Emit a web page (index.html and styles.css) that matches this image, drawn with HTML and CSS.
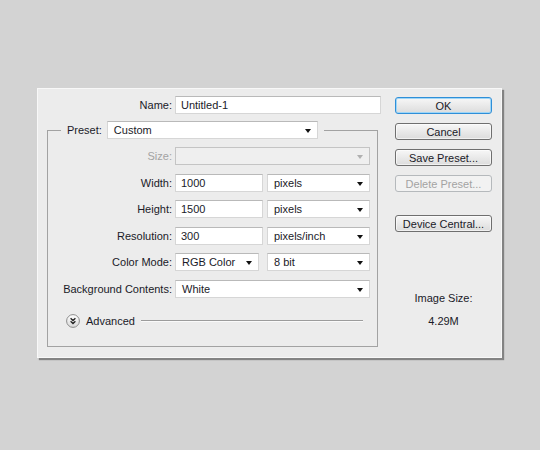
FILE: index.html
```html
<html>
	<head>
		<meta name="viewport" content="width=device-width, initial-scale=1">
		<link rel="stylesheet" href="styles.css">
	</head>
	<body>
		<form class="dialog">
			<div class="main">
				<div class="row name-row">
					<label class="lbl" for="docName">Name:</label>
					<input class="field w-name" id="docName" value="Untitled-1" />
				</div>

				<fieldset class="group">
					<legend class="preset">
						<span class="preset-lbl">Preset:</span>
						<div class="select w-preset">Custom</div>
					</legend>

					<div class="rows">
						<div class="row">
							<span class="lbl off">Size:</span>
							<div class="select off w-full"></div>
						</div>
						<div class="row">
							<label class="lbl" for="docWidth">Width:</label>
							<input class="field w-num" id="docWidth" value="1000" />
							<div class="select w-unit">pixels</div>
						</div>
						<div class="row">
							<label class="lbl" for="docHeight">Height:</label>
							<input class="field w-num" id="docHeight" value="1500" />
							<div class="select w-unit">pixels</div>
						</div>
						<div class="row">
							<label class="lbl" for="docRes">Resolution:</label>
							<input class="field w-num" id="docRes" value="300" />
							<div class="select w-unit">pixels/inch</div>
						</div>
						<div class="row">
							<span class="lbl">Color Mode:</span>
							<div class="select w-mode">RGB Color</div>
							<div class="select w-unit">8 bit</div>
						</div>
						<div class="row">
							<span class="lbl">Background Contents:</span>
							<div class="select w-full">White</div>
						</div>
					</div>

					<div class="advanced">
						<svg class="toggle" width="14" height="14" viewBox="0 0 14 14">
							<defs>
								<linearGradient id="knob" x1="0" y1="0" x2="0" y2="1">
									<stop offset="0" stop-color="#ffffff" />
									<stop offset="1" stop-color="#d8d8d8" />
								</linearGradient>
							</defs>
							<circle cx="7" cy="7" r="6.4" fill="url(#knob)" stroke="#8c8c8c" />
							<path d="M4.6 4.3 L7 6.5 L9.4 4.3 M4.6 7.3 L7 9.5 L9.4 7.3" fill="none" stroke="#222" stroke-width="1.3" />
						</svg>
						<span>Advanced</span>
						<span class="rule"></span>
					</div>
				</fieldset>
			</div>

			<div class="side">
				<button class="btn default">OK</button>
				<button class="btn">Cancel</button>
				<button class="btn">Save Preset...</button>
				<button class="btn" disabled>Delete Preset...</button>
				<button class="btn device">Device Central...</button>

				<div class="info">
					<div>Image Size:</div>
					<div class="size">4.29M</div>
				</div>
			</div>
		</form>
	</body>
</html>
```

FILE: styles.css
```css
body {
	margin: 0;
	background: #d3d3d3;
	font: 11px "Liberation Sans", Arial, sans-serif;
	color: #1a1a28;
}

.dialog {
	display: flex;
	gap: 14px;
	width: 465px;
	height: 270px;
	box-sizing: border-box;
	margin: 88px 0 0 37px;
	padding: 7px 9px 0 9px;
	background: #ececec;
	border: 1px solid #f8f8f8;
	box-shadow: 2px 2px 1px rgba(0, 0, 0, 0.38);
}

.main {
	width: 334px;
}

.row {
	display: flex;
	align-items: center;
	height: 18px;
}

.name-row {
	padding-left: 14px;
}

.lbl {
	flex: none;
	width: 111px;
	margin-right: 3px;
	text-align: right;
}

.off {
	color: #a3a3a3;
}

/* text boxes and drop-downs */
.field,
.select {
	flex: none;
	box-sizing: border-box;
	height: 18px;
	margin: 0;
	background: #fff;
	border: 1px solid #d6d6d6;
	border-top-color: #b9b9b9;
	font: inherit;
	color: inherit;
	outline: none;
}

.field {
	padding: 0 0 0 5px;
}

.select {
	position: relative;
	padding-left: 6px;
	line-height: 16px;
}

.select::after {
	content: "";
	position: absolute;
	right: 6px;
	top: 7px;
	border-left: 3.5px solid transparent;
	border-right: 3.5px solid transparent;
	border-top: 4px solid #111;
}

.select.off {
	background: #efefef;
	border-color: #c4c4c4;
}

.select.off::after {
	border-top-color: #b0b0b0;
}

.w-name { width: 206px; }
.w-preset { width: 211px; }
.w-full { width: 195px; }
.w-num { width: 88px; margin-right: 4px; }
.w-mode { width: 84px; margin-right: 8px; }
.w-unit { width: 103px; }

/* Preset group box */
.group {
	box-sizing: border-box;
	width: 331px;
	min-width: 0;
	margin: 7px 0 0;
	padding: 8px 0 17px 13px;
	border: 1px solid #a2a2a2;
}

.preset {
	display: flex;
	align-items: center;
	height: 18px;
	padding: 0 6px;
}

.preset-lbl {
	margin-right: 5px;
}

.rows {
	display: grid;
	row-gap: 8.6px;
}

.advanced {
	display: flex;
	align-items: center;
	height: 15px;
	margin-top: 16px;
	padding-left: 5px;
}

.toggle {
	margin-right: 6px;
}

.rule {
	flex: 1;
	height: 0;
	margin: 0 14px 0 6px;
	border-top: 1px solid #9c9c9c;
	border-bottom: 1px solid #fafafa;
}

/* buttons column */
.side {
	display: flex;
	flex-direction: column;
	width: 97px;
	padding-top: 1px;
}

.btn {
	box-sizing: border-box;
	height: 17px;
	margin: 0 0 9px;
	padding: 0;
	background: linear-gradient(#f7f7f7, #dcdcdc);
	border: 1px solid #6f6f6f;
	border-radius: 3px;
	box-shadow: inset 0 0 0 1px rgba(255, 255, 255, 0.6);
	font: inherit;
	color: #1a1a28;
}

.btn.default {
	border-color: #2f8fd8;
	box-shadow: inset 0 0 0 1px #9fd6f7;
}

.btn:disabled {
	background: #f2f2f2;
	border-color: #b5b9bc;
	box-shadow: none;
	color: #a3a3a3;
}

.btn.device {
	margin-top: 14px;
}

.info {
	margin-top: 51px;
	text-align: center;
	line-height: 13px;
}

.size {
	margin-top: 10px;
}
```
